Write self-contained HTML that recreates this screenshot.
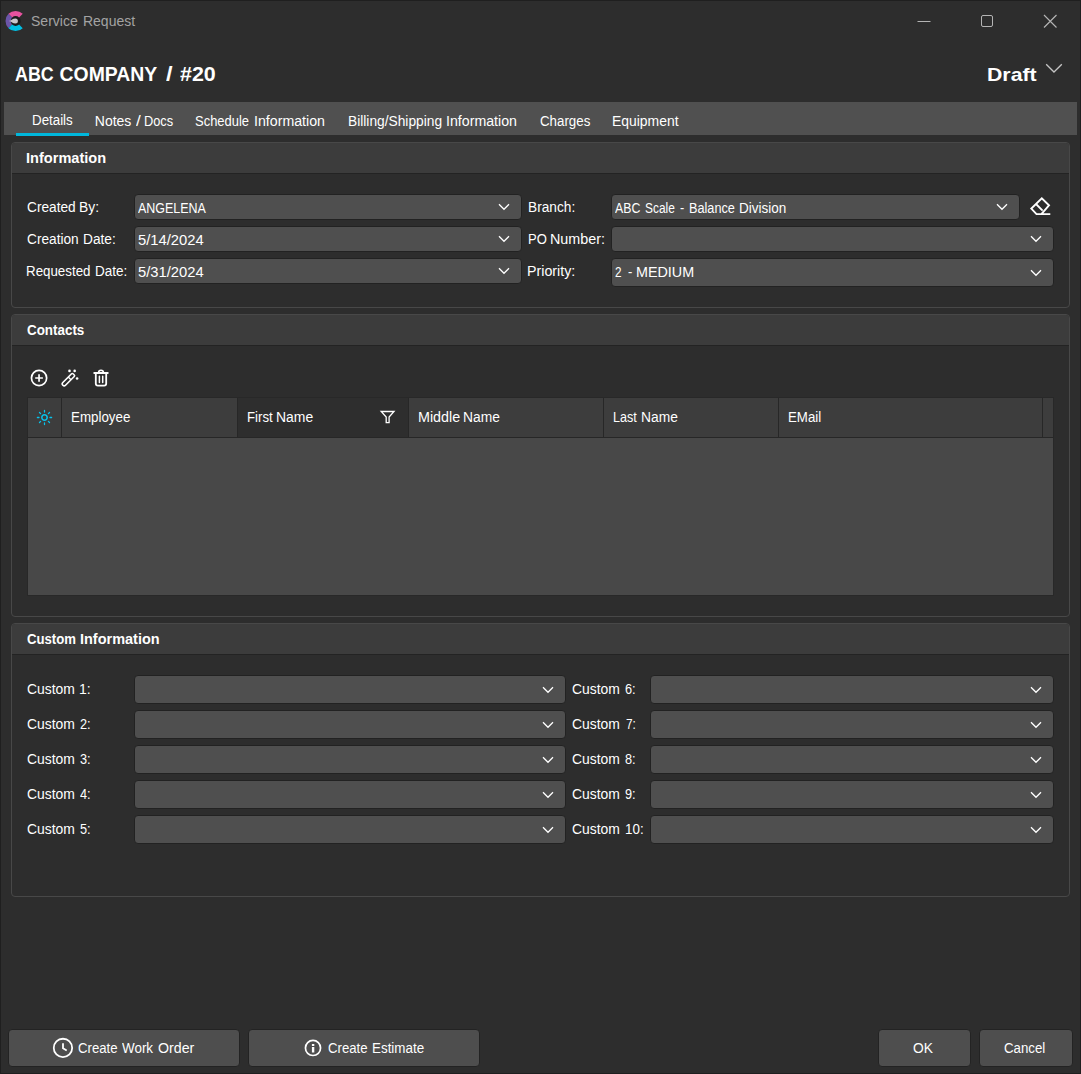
<!DOCTYPE html>
<html lang="en"><head><meta charset="utf-8"><title>Service Request</title>
<style>
html,body{margin:0;padding:0;background:#2d2d2d;}
body{width:1081px;height:1074px;position:relative;overflow:hidden;font-family:"Liberation Sans",sans-serif;}
.abs,.t,.cb,.pn,.ph,.btn,svg.i{position:absolute;}
.t{white-space:pre;line-height:30px;transform-origin:0 0;}
.g{color:#fff;font-weight:400;}
#win{left:0;top:0;width:1079px;height:1072px;border:1px solid #1f1f1f;position:absolute;box-sizing:content-box;}
#tabbar{left:4px;top:102px;width:1073px;height:33px;background:#505050;}
#tabsel{left:16px;top:133px;width:73px;height:3px;background:#00b7dc;}
.pn{border:1px solid #484848;border-radius:4px;box-sizing:border-box;background:#2d2d2d;overflow:hidden;}
.ph{left:0;top:0;right:0;height:30px;background:#3c3c3c;border-bottom:1px solid #232323;}
.cb{background:#4f4f4f;border:1px solid #222222;border-radius:4px;}
.chev{position:absolute;right:11px;top:50%;width:12px;height:8px;margin-top:-4px;}
.btn{background:#4e4e4e;border:1px solid #232323;border-radius:4px;box-sizing:border-box;}
#grid{left:28px;top:398px;width:1025px;height:197px;background:#484848;box-shadow:0 0 0 1px #282828;}
#gh{left:0;top:0;width:1025px;height:40px;background:#3d3d3d;border-bottom:1px solid #272727;box-sizing:border-box;}
.gl{position:absolute;top:0;width:1px;height:39px;background:#272727;}
</style></head><body>
<div id="win"></div>
<div id="tabbar" class="abs"></div>
<div id="tabsel" class="abs"></div>

<div class="pn" style="left:11px;top:142px;width:1059px;height:166px"><div class="ph abs"></div></div>
<div class="pn" style="left:11px;top:314px;width:1059px;height:303px"><div class="ph abs"></div></div>
<div class="pn" style="left:11px;top:623px;width:1059px;height:274px"><div class="ph abs"></div></div>

<div id="grid" class="abs">
 <div id="gh" class="abs"></div>
 <div class="abs" style="left:210px;top:0;width:170px;height:39px;background:#2e2e2e"></div>
 <div class="gl" style="left:33px"></div>
 <div class="gl" style="left:209px"></div>
 <div class="gl" style="left:380px"></div>
 <div class="gl" style="left:575px"></div>
 <div class="gl" style="left:750px"></div>
 <div class="gl" style="left:1014px"></div>
</div>

<div class="cb" style="left:134px;top:194px;width:386px;height:24px"><svg class="chev" viewBox="0 0 12 8"><path d="M1 1.2 L6 6.3 L11 1.2" fill="none" stroke="#fff" stroke-width="1.3"/></svg></div>
<div class="cb" style="left:134px;top:226px;width:386px;height:24px"><svg class="chev" viewBox="0 0 12 8"><path d="M1 1.2 L6 6.3 L11 1.2" fill="none" stroke="#fff" stroke-width="1.3"/></svg></div>
<div class="cb" style="left:134px;top:258px;width:386px;height:24px"><svg class="chev" viewBox="0 0 12 8"><path d="M1 1.2 L6 6.3 L11 1.2" fill="none" stroke="#fff" stroke-width="1.3"/></svg></div>
<div class="cb" style="left:611px;top:194px;width:407px;height:24px"><svg class="chev" viewBox="0 0 12 8"><path d="M1 1.2 L6 6.3 L11 1.2" fill="none" stroke="#fff" stroke-width="1.3"/></svg></div>
<div class="cb" style="left:611px;top:226px;width:441px;height:24px"><svg class="chev" viewBox="0 0 12 8"><path d="M1 1.2 L6 6.3 L11 1.2" fill="none" stroke="#fff" stroke-width="1.3"/></svg></div>
<div class="cb" style="left:611px;top:258px;width:441px;height:27px"><svg class="chev" viewBox="0 0 12 8"><path d="M1 1.2 L6 6.3 L11 1.2" fill="none" stroke="#fff" stroke-width="1.3"/></svg></div>
<div class="cb" style="left:134px;top:675px;width:430px;height:27px"><svg class="chev" viewBox="0 0 12 8"><path d="M1 1.2 L6 6.3 L11 1.2" fill="none" stroke="#fff" stroke-width="1.3"/></svg></div>
<div class="cb" style="left:650px;top:675px;width:402px;height:27px"><svg class="chev" viewBox="0 0 12 8"><path d="M1 1.2 L6 6.3 L11 1.2" fill="none" stroke="#fff" stroke-width="1.3"/></svg></div>
<div class="cb" style="left:134px;top:710px;width:430px;height:27px"><svg class="chev" viewBox="0 0 12 8"><path d="M1 1.2 L6 6.3 L11 1.2" fill="none" stroke="#fff" stroke-width="1.3"/></svg></div>
<div class="cb" style="left:650px;top:710px;width:402px;height:27px"><svg class="chev" viewBox="0 0 12 8"><path d="M1 1.2 L6 6.3 L11 1.2" fill="none" stroke="#fff" stroke-width="1.3"/></svg></div>
<div class="cb" style="left:134px;top:745px;width:430px;height:27px"><svg class="chev" viewBox="0 0 12 8"><path d="M1 1.2 L6 6.3 L11 1.2" fill="none" stroke="#fff" stroke-width="1.3"/></svg></div>
<div class="cb" style="left:650px;top:745px;width:402px;height:27px"><svg class="chev" viewBox="0 0 12 8"><path d="M1 1.2 L6 6.3 L11 1.2" fill="none" stroke="#fff" stroke-width="1.3"/></svg></div>
<div class="cb" style="left:134px;top:780px;width:430px;height:27px"><svg class="chev" viewBox="0 0 12 8"><path d="M1 1.2 L6 6.3 L11 1.2" fill="none" stroke="#fff" stroke-width="1.3"/></svg></div>
<div class="cb" style="left:650px;top:780px;width:402px;height:27px"><svg class="chev" viewBox="0 0 12 8"><path d="M1 1.2 L6 6.3 L11 1.2" fill="none" stroke="#fff" stroke-width="1.3"/></svg></div>
<div class="cb" style="left:134px;top:815px;width:430px;height:27px"><svg class="chev" viewBox="0 0 12 8"><path d="M1 1.2 L6 6.3 L11 1.2" fill="none" stroke="#fff" stroke-width="1.3"/></svg></div>
<div class="cb" style="left:650px;top:815px;width:402px;height:27px"><svg class="chev" viewBox="0 0 12 8"><path d="M1 1.2 L6 6.3 L11 1.2" fill="none" stroke="#fff" stroke-width="1.3"/></svg></div>

<div class="btn" style="left:8px;top:1029px;width:232px;height:38px"></div>
<div class="btn" style="left:248px;top:1029px;width:232px;height:38px"></div>
<div class="btn" style="left:878px;top:1029px;width:93px;height:38px"></div>
<div class="btn" style="left:979px;top:1029px;width:94px;height:38px"></div>

<svg class="i" style="left:0;top:0" width="1081" height="1074" viewBox="0 0 1081 1074" fill="none" stroke-linecap="round" stroke-linejoin="round">
 <!-- app logo -->
 <g transform="translate(15.6 21)">
  <circle r="5" fill="#1c1c1c"/>
  <path d="M-5.3 -5.3 A7.5 7.5 0 0 1 5.3 -5.3" stroke="#e8529f" stroke-width="5.2" stroke-linecap="butt"/>
  <path d="M-5.3 5.3 A7.5 7.5 0 0 1 -5.3 -5.3" stroke="#6b55a8" stroke-width="5.2" stroke-linecap="butt"/>
  <path d="M5.3 5.3 A7.5 7.5 0 0 1 -5.3 5.3" stroke="#00c0e4" stroke-width="5.2" stroke-linecap="butt"/>
  <path d="M-6.8 0 C-4 -0.5 -3 -2.5 -0.2 -2.5 A2.5 2.5 0 1 1 -0.2 2.5 C-3 2.5 -4 0.5 -6.8 0 Z" fill="#c8c6cc"/>
 </g>
 <!-- window controls -->
 <g stroke="#b4b4b4" stroke-width="1" stroke-linecap="butt">
  <path d="M917.5 21.5 H930.5"/>
  <rect x="981.5" y="15.5" width="11" height="11" rx="1.5"/>
  <path d="M1044 15 L1056.5 27.5 M1056.5 15 L1044 27.5" stroke-width="1.15"/>
 </g>
 <!-- draft chevron -->
 <path d="M1046.2 64.2 L1054 72 L1061.8 64.2" stroke="#c4c4c4" stroke-width="1.3" stroke-linecap="butt" stroke-linejoin="miter"/>
 <!-- eraser -->
 <g stroke="#fff" stroke-width="1.9" stroke-linejoin="miter" stroke-linecap="butt">
  <path d="M1041.4 214.1 L1036.5 214.1 L1031.3 208.6 L1041.8 198.3 L1049 205.3 L1041.4 214.1 H1050.3"/>
  <path d="M1036 204 L1042.6 210.6"/>
 </g>
 <!-- plus circle -->
 <g stroke="#fff" stroke-width="1.7">
  <circle cx="39.05" cy="378" r="7.6"/>
  <path d="M35.2 378 H42.9 M39.05 374.2 V381.8" stroke-linecap="butt"/>
 </g>
 <!-- wand -->
 <g stroke="#fff" stroke-width="1.5">
  <g transform="translate(68.4 379.65) rotate(45)"><path d="M-1.9 -6.4 A1 1 0 0 1 -0.9 -7.4 H0.9 A1 1 0 0 1 1.9 -6.4 V6.0 A1.9 1.9 0 0 1 -1.9 6.0 Z" stroke-width="1.6"/>
  <path d="M-1.9 -1.7 H1.9" stroke-linecap="butt" stroke-width="1.4"/></g>
 </g>
 <g fill="#fff"><circle cx="69.5" cy="370.9" r="1.3"/><circle cx="74.65" cy="370.9" r="1.3"/><circle cx="77.1" cy="378.5" r="1.3"/></g>
 <!-- trash -->
 <g stroke="#fff" stroke-width="1.8">
  <path d="M94.2 373 H107.8" />
  <path d="M98.6 372.6 C98.6 369.5 103.4 369.5 103.4 372.6" stroke-width="1.6"/>
  <path d="M95.8 373.6 V383.6 A2.1 2.1 0 0 0 97.9 385.7 H104.1 A2.1 2.1 0 0 0 106.2 383.6 V373.6" stroke-linecap="butt"/>
  <path d="M99.4 376.2 V382.4 M102.7 376.2 V382.4" stroke-width="1.5"/>
 </g>
 <!-- sun -->
 <g stroke="#08c2ea" stroke-width="1.3" transform="translate(44.5 417.5)">
  <circle r="2.7" stroke-width="1.5"/>
  <path d="M0 -5.5 V-7.1 M0 5.5 V7.1 M-5.5 0 H-7.1 M5.5 0 H7.1 M3.89 -3.89 L5.02 -5.02 M-3.89 -3.89 L-5.02 -5.02 M3.89 3.89 L5.02 5.02 M-3.89 3.89 L-5.02 5.02"/>
 </g>
 <!-- filter -->
 <path d="M381.2 411.5 H394 L389.1 417 V422.6 H386.2 V417 Z" stroke="#fff" stroke-width="1.3" stroke-linejoin="miter"/>
 <!-- clock -->
 <g stroke="#fff" stroke-width="1.8">
  <circle cx="62.95" cy="1047.95" r="9.2"/>
  <path d="M63 1043.2 V1048.3 L66.7 1050.6" stroke-linecap="butt" stroke-linejoin="miter"/>
 </g>
 <!-- info -->
 <circle cx="313" cy="1047.95" r="7.55" stroke="#fff" stroke-width="1.7"/>
 <path d="M311.9 1043.9 h2.4 v2 h-2.4 z M311.9 1047 h2.4 v5.4 h-2.4 z" fill="#fff" stroke="none"/>
</svg>


<div class="g" style="font-size:15.5px;color:#a3a3a3"><span class="t" style="left:31.30px;top:6px;transform:scaleX(0.904)">Service</span> <span class="t" style="left:82.90px;top:6px;transform:scaleX(0.902)">Request</span></div>
<div class="g" style="font-size:19.4px;font-weight:700"><span class="t" style="left:15.30px;top:59px;transform:scaleX(0.921)">ABC</span> <span class="t" style="left:59.60px;top:59px">COMPANY</span> <span class="t" style="left:165.69px;top:59px;transform:scaleX(1.220)">/</span> <span class="t" style="left:180.20px;top:59px;transform:scaleX(1.106)">#20</span></div>
<div class="g" style="font-size:18.6px;font-weight:700"><span class="t" style="left:986.86px;top:60px;transform:scaleX(1.144)">Draft</span></div>
<div class="g" style="font-size:14px"><span class="t" style="left:31.85px;top:105px;transform:scaleX(0.952)">Details</span></div>
<div class="g" style="font-size:14px"><span class="t" style="left:94.80px;top:106px">Notes</span> <span class="t" style="left:135.66px;top:106px;transform:scaleX(1.220)">/</span> <span class="t" style="left:143.99px;top:106px;transform:scaleX(0.913)">Docs</span></div>
<div class="g" style="font-size:14px"><span class="t" style="left:195.37px;top:106px;transform:scaleX(0.926)">Schedule</span> <span class="t" style="left:254.29px;top:106px;transform:scaleX(1.013)">Information</span></div>
<div class="g" style="font-size:14px"><span class="t" style="left:347.72px;top:106px;transform:scaleX(0.983)">Billing/Shipping</span> <span class="t" style="left:446.09px;top:106px;transform:scaleX(1.013)">Information</span></div>
<div class="g" style="font-size:14px"><span class="t" style="left:539.60px;top:106px;transform:scaleX(0.951)">Charges</span></div>
<div class="g" style="font-size:14px"><span class="t" style="left:611.71px;top:106px;transform:scaleX(0.994)">Equipment</span></div>
<div class="g" style="font-size:14px;font-weight:700"><span class="t" style="left:25.96px;top:143px;transform:scaleX(1.041)">Information</span></div>
<div class="g" style="font-size:14px"><span class="t" style="left:26.50px;top:192px;transform:scaleX(0.978)">Created</span> <span class="t" style="left:78.61px;top:192px;transform:scaleX(0.989)">By:</span></div>
<div class="g" style="font-size:14px"><span class="t" style="left:26.50px;top:224px;transform:scaleX(0.977)">Creation</span> <span class="t" style="left:82.62px;top:224px;transform:scaleX(0.978)">Date:</span></div>
<div class="g" style="font-size:14px"><span class="t" style="left:26.25px;top:256px;transform:scaleX(0.952)">Requested</span> <span class="t" style="left:94.84px;top:256px;transform:scaleX(0.962)">Date:</span></div>
<div class="g" style="font-size:14px"><span class="t" style="left:138.30px;top:193px;transform:scaleX(0.891)">ANGELENA</span></div>
<div class="g" style="font-size:14px"><span class="t" style="left:138.00px;top:225px;transform:scaleX(1.055)">5/14/2024</span></div>
<div class="g" style="font-size:14px"><span class="t" style="left:138.00px;top:257px;transform:scaleX(1.055)">5/31/2024</span></div>
<div class="g" style="font-size:14px"><span class="t" style="left:527.52px;top:192px;transform:scaleX(0.978)">Branch:</span></div>
<div class="g" style="font-size:14px"><span class="t" style="left:527.57px;top:224px;transform:scaleX(0.932)">PO</span> <span class="t" style="left:550.27px;top:224px;transform:scaleX(1.025)">Number:</span></div>
<div class="g" style="font-size:14px"><span class="t" style="left:527.48px;top:256px;transform:scaleX(1.017)">Priority:</span></div>
<div class="g" style="font-size:14px"><span class="t" style="left:615.30px;top:193px;transform:scaleX(0.879)">ABC</span> <span class="t" style="left:644.65px;top:193px;transform:scaleX(0.850)">Scale</span> <span class="t" style="left:679.60px;top:193px;transform:scaleX(0.900)">-</span> <span class="t" style="left:688.69px;top:193px;transform:scaleX(0.906)">Balance</span> <span class="t" style="left:738.94px;top:193px;transform:scaleX(0.965)">Division</span></div>
<div class="g" style="font-size:14px"><span class="t" style="left:614.99px;top:257px;transform:scaleX(0.840)">2</span> <span class="t" style="left:628.20px;top:257px;transform:scaleX(0.920)">-</span> <span class="t" style="left:636.38px;top:257px;transform:scaleX(1.024)">MEDIUM</span></div>
<div class="g" style="font-size:14px;font-weight:700"><span class="t" style="left:27.00px;top:315px;transform:scaleX(0.957)">Contacts</span></div>
<div class="g" style="font-size:14px"><span class="t" style="left:70.55px;top:402px;transform:scaleX(0.954)">Employee</span></div>
<div class="g" style="font-size:14px"><span class="t" style="left:246.56px;top:402px;transform:scaleX(0.942)">First</span> <span class="t" style="left:276.01px;top:402px;transform:scaleX(0.994)">Name</span></div>
<div class="g" style="font-size:14px"><span class="t" style="left:417.68px;top:402px;transform:scaleX(1.023)">Middle</span> <span class="t" style="left:463.41px;top:402px;transform:scaleX(0.986)">Name</span></div>
<div class="g" style="font-size:14px"><span class="t" style="left:612.90px;top:402px;transform:scaleX(0.896)">Last</span> <span class="t" style="left:641.21px;top:402px;transform:scaleX(0.986)">Name</span></div>
<div class="g" style="font-size:14px"><span class="t" style="left:787.55px;top:402px;transform:scaleX(0.947)">EMail</span></div>
<div class="g" style="font-size:14px;font-weight:700"><span class="t" style="left:27.20px;top:624px;transform:scaleX(0.940)">Custom</span> <span class="t" style="left:80.27px;top:624px;transform:scaleX(1.034)">Information</span></div>
<div class="g" style="font-size:14px"><span class="t" style="left:26.50px;top:674px;transform:scaleX(0.992)">Custom</span> <span class="t" style="left:79.00px;top:674px">1:</span></div>
<div class="g" style="font-size:14px"><span class="t" style="left:26.50px;top:709px;transform:scaleX(0.992)">Custom</span> <span class="t" style="left:80.00px;top:709px;transform:scaleX(0.909)">2:</span></div>
<div class="g" style="font-size:14px"><span class="t" style="left:26.50px;top:744px;transform:scaleX(0.992)">Custom</span> <span class="t" style="left:80.00px;top:744px;transform:scaleX(0.909)">3:</span></div>
<div class="g" style="font-size:14px"><span class="t" style="left:26.50px;top:779px;transform:scaleX(0.992)">Custom</span> <span class="t" style="left:80.00px;top:779px;transform:scaleX(0.909)">4:</span></div>
<div class="g" style="font-size:14px"><span class="t" style="left:26.50px;top:814px;transform:scaleX(0.992)">Custom</span> <span class="t" style="left:80.00px;top:814px;transform:scaleX(0.909)">5:</span></div>
<div class="g" style="font-size:14px"><span class="t" style="left:571.80px;top:674px;transform:scaleX(0.992)">Custom</span> <span class="t" style="left:625.00px;top:674px;transform:scaleX(0.909)">6:</span></div>
<div class="g" style="font-size:14px"><span class="t" style="left:571.80px;top:709px;transform:scaleX(0.992)">Custom</span> <span class="t" style="left:625.70px;top:709px;transform:scaleX(0.845)">7:</span></div>
<div class="g" style="font-size:14px"><span class="t" style="left:571.80px;top:744px;transform:scaleX(0.992)">Custom</span> <span class="t" style="left:625.00px;top:744px;transform:scaleX(0.909)">8:</span></div>
<div class="g" style="font-size:14px"><span class="t" style="left:571.80px;top:779px;transform:scaleX(0.992)">Custom</span> <span class="t" style="left:625.00px;top:779px;transform:scaleX(0.909)">9:</span></div>
<div class="g" style="font-size:14px"><span class="t" style="left:571.80px;top:814px;transform:scaleX(0.992)">Custom</span> <span class="t" style="left:624.74px;top:814px;transform:scaleX(0.956)">10:</span></div>
<div class="g" style="font-size:14px"><span class="t" style="left:78.00px;top:1033px;transform:scaleX(0.940)">Create</span> <span class="t" style="left:122.00px;top:1033px;transform:scaleX(0.958)">Work</span> <span class="t" style="left:157.50px;top:1033px;transform:scaleX(1.014)">Order</span></div>
<div class="g" style="font-size:14px"><span class="t" style="left:327.90px;top:1033px;transform:scaleX(0.940)">Create</span> <span class="t" style="left:372.34px;top:1033px;transform:scaleX(0.957)">Estimate</span></div>
<div class="g" style="font-size:14px"><span class="t" style="left:913.30px;top:1033px;transform:scaleX(0.985)">OK</span></div>
<div class="g" style="font-size:14px"><span class="t" style="left:1004.30px;top:1033px;transform:scaleX(0.947)">Cancel</span></div>
</body></html>
